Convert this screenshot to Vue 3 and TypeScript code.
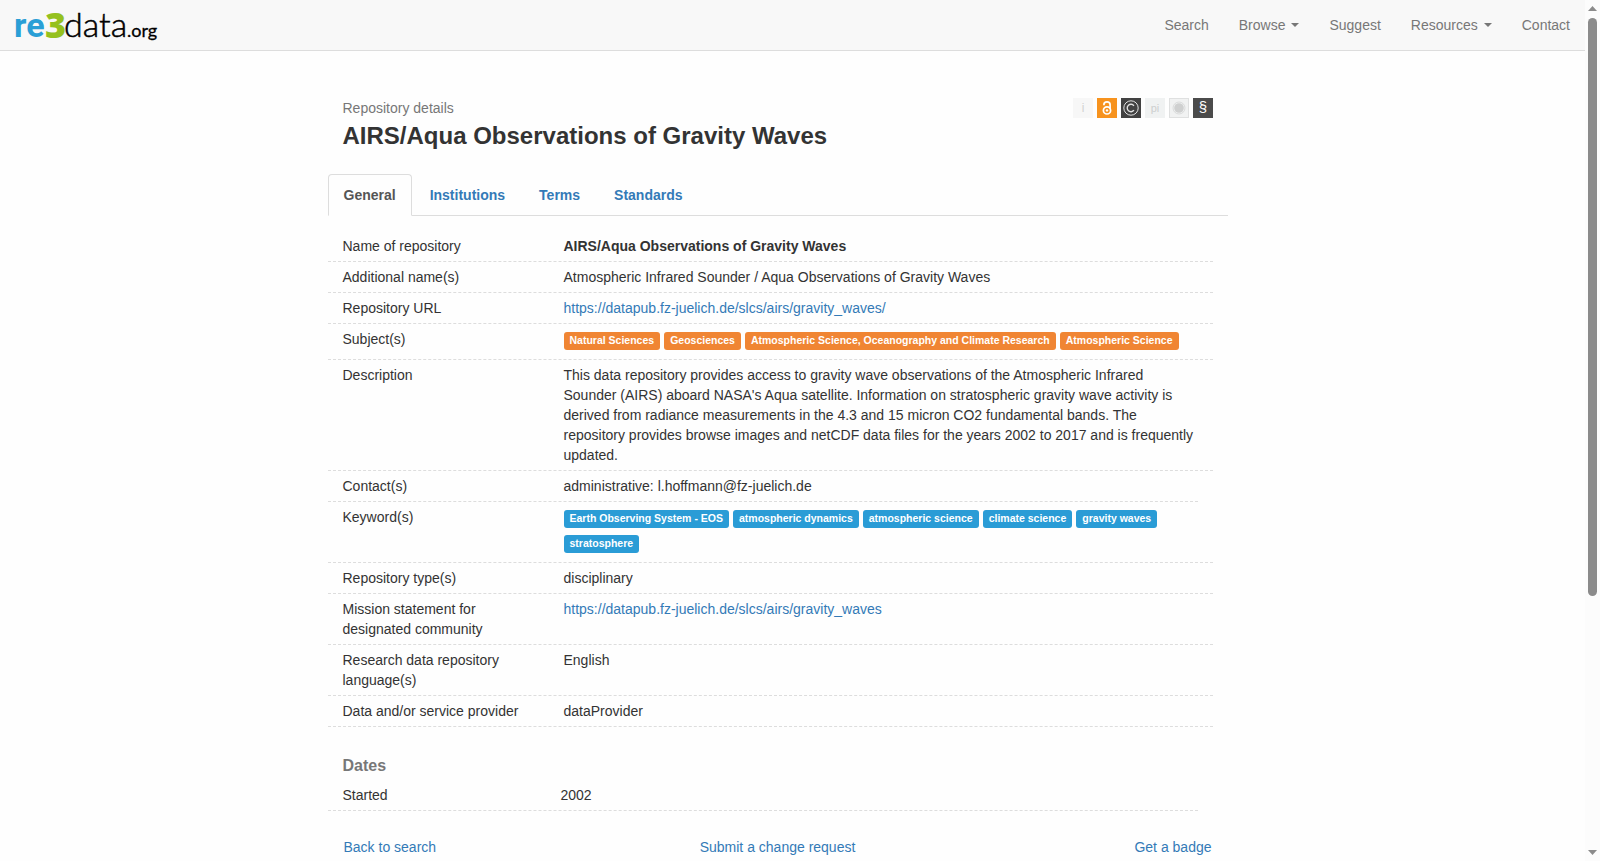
<script setup lang="ts">
import { ref } from 'vue'

interface NavItem {
  label: string
  menu?: boolean
}

interface DetailRow {
  label: string
  text?: string
  strong?: boolean
  link?: string
  tags?: string[]
  tone?: 'subject' | 'keyword'
  short?: boolean
}

const nav: NavItem[] = [
  { label: 'Search' },
  { label: 'Browse', menu: true },
  { label: 'Suggest' },
  { label: 'Resources', menu: true },
  { label: 'Contact' },
]

const tabs: string[] = ['General', 'Institutions', 'Terms', 'Standards']
const activeTab = ref<string>('General')

const rows: DetailRow[] = [
  { label: 'Name of repository', text: 'AIRS/Aqua Observations of Gravity Waves', strong: true },
  { label: 'Additional name(s)', text: 'Atmospheric Infrared Sounder / Aqua Observations of Gravity Waves' },
  { label: 'Repository URL', link: 'https://datapub.fz-juelich.de/slcs/airs/gravity_waves/' },
  {
    label: 'Subject(s)',
    tone: 'subject',
    tags: [
      'Natural Sciences',
      'Geosciences',
      'Atmospheric Science, Oceanography and Climate Research',
      'Atmospheric Science',
    ],
  },
  {
    label: 'Description',
    text: "This data repository provides access to gravity wave observations of the Atmospheric Infrared Sounder (AIRS) aboard NASA's Aqua satellite. Information on stratospheric gravity wave activity is derived from radiance measurements in the 4.3 and 15 micron CO2 fundamental bands. The repository provides browse images and netCDF data files for the years 2002 to 2017 and is frequently updated.",
  },
  { label: 'Contact(s)', text: 'administrative: l.hoffmann@fz-juelich.de', short: true },
  {
    label: 'Keyword(s)',
    tone: 'keyword',
    tags: [
      'Earth Observing System - EOS',
      'atmospheric dynamics',
      'atmospheric science',
      'climate science',
      'gravity waves',
      'stratosphere',
    ],
  },
  { label: 'Repository type(s)', text: 'disciplinary' },
  { label: 'Mission statement for designated community', link: 'https://datapub.fz-juelich.de/slcs/airs/gravity_waves' },
  { label: 'Research data repository language(s)', text: 'English' },
  { label: 'Data and/or service provider', text: 'dataProvider' },
]
</script>

<template>
  <div class="page">
    <header class="navbar">
      <a href="#" class="brand" aria-label="re3data.org">
        <svg width="170" height="50" viewBox="0 0 170 50">
          <text x="14" y="37" class="logo-re">re</text>
          <text x="45" y="38" class="logo-three">3</text>
          <text x="64" y="37" class="logo-data">data</text>
          <text x="127" y="37" class="logo-org">.org</text>
        </svg>
      </a>
      <nav class="nav">
        <template v-for="item in nav" :key="item.label">
          <button v-if="item.menu" type="button" class="nav-item">
            {{ item.label }}<span class="caret"></span>
          </button>
          <a v-else href="#" class="nav-item">{{ item.label }}</a>
        </template>
      </nav>
    </header>

    <main class="content">
      <div class="heading">
        <div>
          <p class="kicker">Repository details</p>
          <h1>AIRS/Aqua Observations of Gravity Waves</h1>
        </div>
        <div class="icons">
          <svg viewBox="0 0 20 20">
            <rect width="20" height="20" fill="#f7f7f7" />
            <text x="10" y="14" class="glyph" font-size="12" fill="#d2d2d2">i</text>
          </svg>
          <svg viewBox="0 0 20 20">
            <rect width="20" height="20" fill="#f7931e" />
            <g fill="none" stroke="#fff" stroke-width="1.7">
              <circle cx="10" cy="12.4" r="3.6" />
              <path d="M6.9 7.2V6.7a3.1 2.9 0 0 1 6.2 0V11" />
            </g>
            <circle cx="10" cy="12.4" r="1.2" fill="#fff" />
          </svg>
          <svg viewBox="0 0 20 20">
            <rect width="20" height="20" fill="#424242" />
            <g fill="none" stroke="#e2e2e2">
              <circle cx="10" cy="10" r="7.2" stroke-width="1" />
              <path d="M12.9 7.8A3.7 3.7 0 1 0 12.9 12.2" stroke-width="1.4" />
            </g>
          </svg>
          <svg viewBox="0 0 20 20">
            <rect width="20" height="20" fill="#f0f2f2" />
            <text x="10" y="14" class="glyph" font-size="11" fill="#cdcfcf">pi</text>
          </svg>
          <svg viewBox="0 0 20 20">
            <rect x=".5" y=".5" width="19" height="19" fill="#f1f2f2" stroke="#dfe0e0" />
            <circle cx="10" cy="10" r="4.8" fill="#cfd0d0" />
            <circle cx="10" cy="10" r="6" fill="none" stroke="#d3d4d4" stroke-width=".8" />
          </svg>
          <svg viewBox="0 0 20 20">
            <rect width="20" height="20" fill="#4b4b4b" />
            <text x="10" y="14" class="glyph" font-size="15" fill="#fff">§</text>
          </svg>
        </div>
      </div>

      <div class="tabs" role="tablist">
        <button
          v-for="tab in tabs"
          :key="tab"
          type="button"
          role="tab"
          class="tab"
          :class="{ active: tab === activeTab }"
          :aria-selected="tab === activeTab"
          @click="activeTab = tab"
        >
          {{ tab }}
        </button>
      </div>

      <dl class="details">
        <div v-for="row in rows" :key="row.label" class="row" :class="{ short: row.short }">
          <dt>{{ row.label }}</dt>
          <dd>
            <strong v-if="row.strong">{{ row.text }}</strong>
            <a v-else-if="row.link" :href="row.link">{{ row.link }}</a>
            <span v-else-if="row.tags" class="tags">
              <span v-for="tag in row.tags" :key="tag" class="tag" :class="row.tone">{{ tag }}</span>
            </span>
            <template v-else>{{ row.text }}</template>
          </dd>
        </div>
      </dl>

      <h2>Dates</h2>
      <dl class="dates">
        <div class="row short">
          <dt>Started</dt>
          <dd>2002</dd>
        </div>
      </dl>

      <div class="actions">
        <a href="#">Back to search</a>
        <a href="#">Submit a change request</a>
        <a href="#">Get a badge</a>
      </div>
    </main>

    <div class="scrollbar" aria-hidden="true">
      <svg width="9" height="5" viewBox="0 0 9 5"><path d="M0 5L4.5 0L9 5Z" fill="#8b8b8b" /></svg>
      <div class="track"><div class="thumb"></div></div>
      <svg width="9" height="5" viewBox="0 0 9 5"><path d="M0 0L4.5 5L9 0Z" fill="#8b8b8b" /></svg>
    </div>
  </div>
</template>

<style>
body {
  background: #fefefe;
  overflow: hidden;
}
</style>

<style scoped>
.page {
  padding-right: 15px;
  font-family: 'Liberation Sans', Arial, sans-serif;
  font-size: 14px;
  line-height: 20px;
  color: #333;
}
.page *,
.page {
  box-sizing: border-box;
}
a {
  color: #337ab7;
  text-decoration: none;
}
button {
  font: inherit;
  background: none;
  border: 0;
  cursor: pointer;
}

.navbar {
  display: flex;
  justify-content: space-between;
  height: 51px;
  background: #f8f8f8;
  border-bottom: 1px solid #ddd;
}
.brand svg {
  display: block;
}
.logo-re {
  font: 700 34px Roboto, sans-serif;
  fill: #2a9fd6;
}
.logo-three {
  font: 800 36px 'Open Sans', sans-serif;
  fill: #95c11f;
}
.logo-data {
  font: 300 34px Lato, sans-serif;
  fill: #000;
  stroke: #000;
  stroke-width: 0.5;
}
.logo-org {
  font: 400 18px Lato, sans-serif;
  fill: #000;
  stroke: #000;
  stroke-width: 0.3;
}
.nav {
  display: flex;
}
.nav-item {
  display: flex;
  align-items: center;
  padding: 0 15px;
  color: #777;
}
.caret {
  margin-left: 6px;
  border: 4px solid transparent;
  border-top-color: #777;
  border-bottom: 0;
}

.content {
  max-width: 930px;
  margin: 0 auto;
  padding: 47px 30px 0 0;
}
.heading {
  display: flex;
  justify-content: space-between;
  padding: 0 15px;
}
.kicker {
  margin: 0;
  color: #777;
}
h1 {
  margin: 3px 0 0;
  font-size: 24px;
  line-height: 30px;
}
.icons {
  display: flex;
  gap: 4px;
}
.icons svg {
  width: 20px;
  height: 20px;
}
.glyph {
  font-family: 'Liberation Sans', Arial, sans-serif;
  text-anchor: middle;
}

.tabs {
  display: flex;
  gap: 2px;
  margin-top: 23px;
  border-bottom: 1px solid #ddd;
}
.tab {
  height: 42px;
  margin-bottom: -1px;
  padding: 0 15px;
  border: 1px solid transparent;
  border-radius: 4px 4px 0 0;
  font-weight: 700;
  color: #337ab7;
}
.tab.active {
  color: #555;
  background: #fefefe;
  border-color: #ddd;
  border-bottom-color: transparent;
}

dl {
  margin: 0;
}
.details {
  margin: 15px 15px 0 0;
}
.dates {
  margin-right: 15px;
}
.row {
  display: flex;
  padding: 5px 0;
  border-bottom: 1px dashed #ddd;
}
.row.short {
  margin-right: 15px;
}
dt {
  flex: 0 0 221px;
  padding: 0 15px;
}
.dates dt {
  flex-basis: 218px;
}
dd {
  flex: 1;
  margin: 0;
  padding: 0 15px;
}
.tags {
  display: flex;
  flex-wrap: wrap;
  gap: 7px 4px;
  padding: 3px 0 4px;
}
.tag {
  height: 18px;
  padding: 0 6px;
  border-radius: 3px;
  font-size: 75%;
  font-weight: 700;
  line-height: 17px;
  color: #fff;
}
.subject {
  background: #f08533;
}
.keyword {
  background: #2a9cd6;
}

h2 {
  margin: 29px 15px 4px;
  font-size: 16px;
  line-height: 20px;
  color: #777;
}
.actions {
  display: grid;
  grid-template-columns: 1fr auto 1fr;
  padding: 26px 16px 0;
}
.actions a:last-child {
  justify-self: end;
}

.scrollbar {
  position: fixed;
  top: 0;
  right: 0;
  bottom: 0;
  width: 15px;
  padding: 6px 0;
  display: flex;
  flex-direction: column;
  align-items: center;
  gap: 7px;
  background: #fcfcfc;
}
.track {
  flex: 1;
  width: 9px;
}
.thumb {
  height: 70%;
  border-radius: 5px;
  background: #8b8b8b;
}
</style>
